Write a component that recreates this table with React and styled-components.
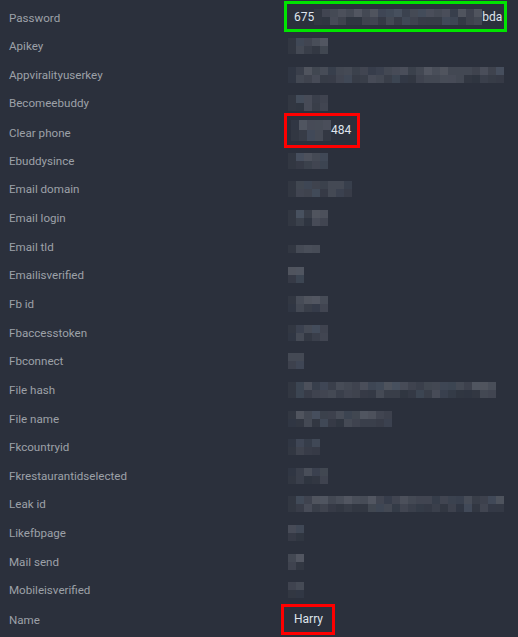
import React from "react";
import styled, { createGlobalStyle } from "styled-components";

const GlobalStyle = createGlobalStyle`
  html, body {
    margin: 0;
    padding: 0;
    background: #2b303c;
  }
  body {
    font-family: Roboto, "Liberation Sans", sans-serif;
  }
`;

const Page = styled.div`
  width: 518px;
  height: 637px;
  overflow: hidden;
  background: #2b303c;
  padding-top: 3px;
  box-sizing: border-box;
`;

const Row = styled.div`
  display: grid;
  grid-template-columns: 288px 1fr;
  align-items: center;
  height: 28.67px;
`;

const Label = styled.div`
  padding-left: 9px;
  font-size: 11.6px;
  color: #9da1a8;
  white-space: nowrap;
`;

const Value = styled.div`
  display: flex;
  align-items: center;
  font-size: 12px;
  color: #dfe4ec;
`;

const Highlight = styled.div`
  display: inline-flex;
  align-items: center;
  box-sizing: border-box;
  border: 3px solid ${p => p.$color};
  height: ${p => p.$height}px;
  width: ${p => p.$width}px;
  margin-left: ${p => p.$shift}px;
  margin-top: ${p => p.$lift}px;
  padding-left: ${p => p.$pad}px;
  position: relative;
  z-index: 1;
`;

const Mosaic = styled.div`
  display: grid;
  grid-template-columns: repeat(${p => p.$cols}, 8px);
  grid-auto-rows: ${p => p.$cell}px;
  margin-top: ${p => p.$dy}px;
  margin-left: ${p => p.$dx}px;
`;

const Cell = styled.div`
  background: #2b303c;
`;

function rng(seed) {
  let s = seed * 9301 + 49297;
  return () => {
    s = (s * 9301 + 49297) % 233280;
    return s / 233280;
  };
}

function Pixels({ cols, rows = 2, seed = 1, cell = 8, dy = 0, dx = 0 }) {
  const rand = rng(seed);
  const cells = [];
  for (let r = 0; r < rows; r++) {
    for (let c = 0; c < cols; c++) {
      const base = r === 0 ? 0.22 : 0.14;
      const a = c === 0 && cols > 2 ? 0.06 : base + (rand() - 0.5) * 0.2;
      const tint = rand() > 0.8 ? "140,158,180" : "165,168,176";
      cells.push(
        <Cell key={r + "-" + c} style={{ background: `rgba(${tint},${a.toFixed(2)})` }} />
      );
    }
  }
  return (
    <Mosaic $cols={cols} $cell={cell} $dy={dy} $dx={dx}>
      {cells}
    </Mosaic>
  );
}

const rows = [
  { label: "Password", kind: "password" },
  { label: "Apikey", cols: 5 },
  { label: "Appviralityuserkey", cols: 27 },
  { label: "Becomeebuddy", cols: 5 },
  { label: "Clear phone", kind: "phone" },
  { label: "Ebuddysince", cols: 5 },
  { label: "Email domain", cols: 8 },
  { label: "Email login", cols: 5 },
  { label: "Email tld", cols: 4, rows: 1, dy: 4 },
  { label: "Emailisverified", cols: 2 },
  { label: "Fb id", cols: 5 },
  { label: "Fbaccesstoken", cols: 5 },
  { label: "Fbconnect", cols: 2 },
  { label: "File hash", cols: 26 },
  { label: "File name", cols: 13 },
  { label: "Fkcountryid", cols: 4 },
  { label: "Fkrestaurantidselected", cols: 5 },
  { label: "Leak id", cols: 27 },
  { label: "Likefbpage", cols: 2 },
  { label: "Mail send", cols: 2 },
  { label: "Mobileisverified", cols: 2 },
  { label: "Name", kind: "name" },
];

function renderValue(row, i) {
  if (row.kind === "password") {
    return (
      <Highlight $color="#00e400" $width={223} $height={31} $shift={-4} $lift={-2} $pad={7}>
        675
        <Pixels cols={21} seed={99} />
        bda
      </Highlight>
    );
  }
  if (row.kind === "phone") {
    return (
      <Highlight $color="#ff0000" $width={76} $height={35} $shift={-4} $lift={-5} $pad={4}>
        <Pixels cols={5} seed={42} cell={10.5} />
        484
      </Highlight>
    );
  }
  if (row.kind === "name") {
    return (
      <Highlight $color="#ff0000" $width={54} $height={31} $shift={-7} $lift={-1} $pad={10}>
        Harry
      </Highlight>
    );
  }
  return <Pixels cols={row.cols} rows={row.rows} dy={row.dy} seed={i * 7 + 3} />;
}

export default function App() {
  return (
    <Page>
      <GlobalStyle />
      {rows.map((row, i) => (
        <Row key={row.label}>
          <Label>{row.label}</Label>
          <Value>{renderValue(row, i)}</Value>
        </Row>
      ))}
    </Page>
  );
}
